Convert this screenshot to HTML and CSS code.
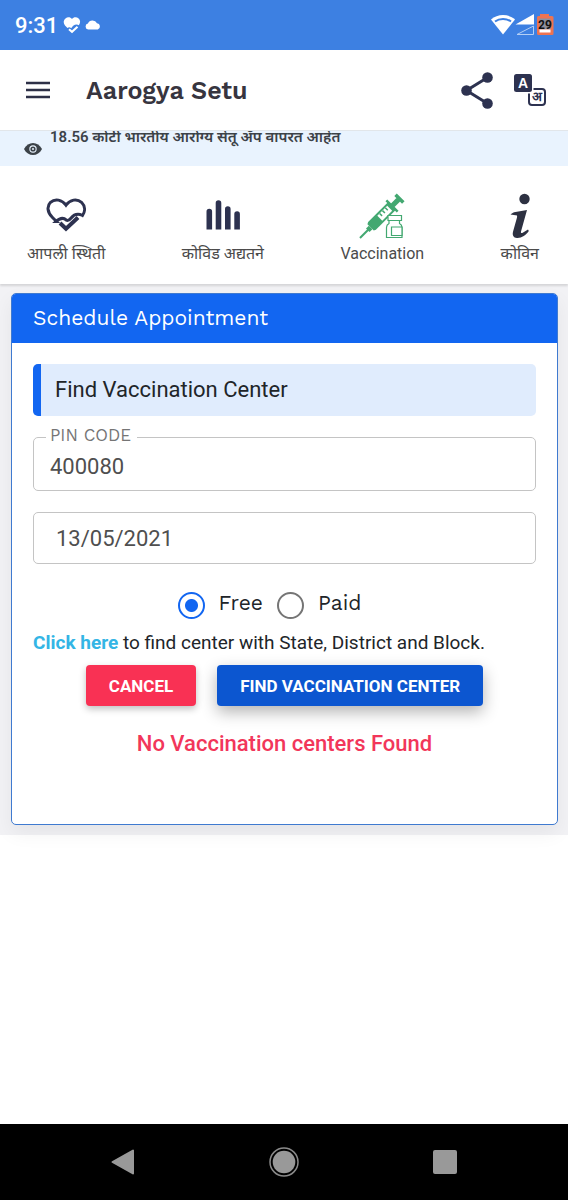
FILE: index.html
```html
<!DOCTYPE html>
<html lang="mr">
<head>
    <meta charset="UTF-8">
    <meta name="viewport" content="width=device-width, initial-scale=1.0">
    <title>Aarogya Setu</title>
    <link rel="stylesheet" href="styles.css">
</head>
<body>
    <div class="status-bar">
        <span class="clock">9:31</span>
        <svg class="status-heart" width="18" height="17" viewBox="0 0 18 17">
            <path d="M9 2C7.500 0 4.500-.200 2.500 1.400.200 3.300.200 6.400 2 8.500l2.500 2.600c1.200-1.200 2.600-1 3.700.100C9.600 9 11.300 7.500 13.500 7.500c1 0 1.700.200 2.300.700 1.700-2.100 1.800-4.900-.200-6.700C13.600-.200 10.500 0 9 2z" fill="#fff"/>
            <path d="M6 12.200l3 2.600 5.500-5" fill="none" stroke="#fff" stroke-width="2"/>
        </svg>
        <svg class="status-cloud" width="16" height="10" viewBox="0 0 16 10">
            <path d="M3.200 9.500a3 3 0 0 1-.3-5.900A5 5 0 0 1 12 3.300a3.200 3.200 0 0 1 .8 6.200z" fill="#fff"/>
        </svg>
        <svg class="status-signals" width="64" height="24" viewBox="0 0 64 24">
            <path d="M0 6.500C6.500.500 17.500.500 24 6.500L12 21.500z" fill="#fff"/>
            <path d="M4 8.500C8.500 5 15.500 5 20 8.500" fill="none" stroke="#3d80e2" stroke-width="2"/>
            <path d="M24.500 11.500L43 1v10.500z" fill="#fff"/>
            <path d="M26 21.500L42.500 13v8.500z" fill="none" stroke="#b4cff5"/>
            <path d="M49 1h9v2h3a1.500 1.500 0 0 1 1.500 1.500v16A1.500 1.500 0 0 1 61 22H47.500a1.500 1.500 0 0 1-1.500-1.500v-16A1.500 1.500 0 0 1 47.500 3H49z" fill="#ef7350"/>
            <path d="M48.500 5.500h11v11h-11z" fill="#8f8f9c"/>
            <path d="M48.500 16.500h11v3h-11z" fill="#fff"/>
            <text class="battery-level" x="54" y="16" text-anchor="middle">29</text>
        </svg>
    </div>

    <header class="app-header">
        <button class="icon-button" type="button" aria-label="Menu">
            <svg width="24" height="18" viewBox="0 0 24 18">
                <path d="M0 2h24M0 9h24M0 16h24" stroke="#2d3047" stroke-width="2.500"/>
            </svg>
        </button>
        <h1 class="app-title">Aarogya Setu</h1>
        <button class="icon-button" type="button" aria-label="Share">
            <svg width="32" height="38" viewBox="0 0 32 38">
                <path d="M26.500 6.500L5.500 19.500l21 13" fill="none" stroke="#2d3250" stroke-width="3"/>
                <circle cx="26.500" cy="6.500" r="5.300" fill="#2d3250"/>
                <circle cx="5.500" cy="19.500" r="5.300" fill="#2d3250"/>
                <circle cx="26.500" cy="32.500" r="5.300" fill="#2d3250"/>
            </svg>
        </button>
        <button class="icon-button" type="button" aria-label="Language">
            <svg width="32" height="34" viewBox="0 0 32 34">
                <rect x="15" y="16" width="16" height="16" rx="3" fill="#fff" stroke="#2d3250" stroke-width="2"/>
                <rect x="-1" y="0" width="20.500" height="20.500" rx="3" fill="#fff"/>
                <rect x="0" y="1" width="18" height="18" rx="2.500" fill="#2d3250"/>
                <text class="lang-latin" x="9" y="15" text-anchor="middle">A</text>
                <text class="lang-hindi" x="23" y="28" text-anchor="middle">अ</text>
            </svg>
        </button>
    </header>

    <div class="ticker">
        <svg width="18" height="12" viewBox="0 0 18 12">
            <path d="M0 6C4-2 14-2 18 6 14 14 4 14 0 6z" fill="#3c4248"/>
            <circle cx="9" cy="6" r="3.700" fill="#e9f3fe"/>
            <circle cx="9" cy="6" r="2.600" fill="#3c4248"/>
            <circle cx="9" cy="6" r="1" fill="#e9f3fe"/>
        </svg>
        <p class="ticker-text">18.56 कोटी भारतीय आरोग्य सेतू ॲप वापरत आहेत</p>
    </div>

    <nav class="tabs">
        <a class="tab" href="#status">
            <svg width="40" height="48" viewBox="0 0 40 48">
                <path d="M10.500 28.500L6.500 24.500C1 19 .800 13 4.500 9.300c4.500-4 11.500-2.800 15.500 2.900 4-5.700 11-6.900 15.500-2.900 3.700 3.700 4 8.900 1 13.200-4.600-2.300-8.600-1-11.600 2.700-1.800 2.200-3 2.800-4.500 2-2.600-2.500-6.400-2.300-10.400 1.300z" fill="none" stroke="#2d3250" stroke-width="3"/>
                <path d="M14 30l6 5.800L32 24.500" fill="none" stroke="#2d3250" stroke-width="4"/>
            </svg>
            <span>आपली स्थिती</span>
        </a>
        <a class="tab" href="#updates">
            <svg width="40" height="48" viewBox="0 0 40 48">
                <path d="M3.500 36.500V18.500a2.800 2.800 0 0 1 5.600 0v18zM12.700 36.500V10a2.800 2.800 0 0 1 5.600 0v26.500zM22 36.500V16a2.800 2.800 0 0 1 5.600 0v20.500zM31.300 36.500V21a2.800 2.800 0 0 1 5.600 0v15.500z" fill="#2d3250"/>
            </svg>
            <span>कोविड अद्यतने</span>
        </a>
        <a class="tab" href="#vaccination">
            <svg width="46" height="48" viewBox="0 0 46 48">
                <g transform="translate(1 45) rotate(-45)" fill="#43a871">
                    <path d="M0-1h12v2H0z"/>
                    <path d="M11-2.500h4v5h-4z"/>
                    <path d="M15-4.500l2-1h28v11H17l-2-1z"/>
                    <path d="M28-3.500h14v7H28z" fill="#fff"/>
                    <path d="M30.500-3.500h1.500v3.500h-1.500zM34.500-3.500h1.500v3.500h-1.500zM38.500-3.500h1.500v3.500h-1.500z"/>
                    <path d="M44-8h2.500V8H44zM46-2.500h9v5h-9zM54-5.500h3.500v11H54z"/>
                </g>
                <g fill="#fff" stroke="#43a871" stroke-width="1.200">
                    <path d="M30 27.500v3c-2 1-2.500 2-2.500 4v10H43v-10c0-2-.500-3-2.500-4v-3z"/>
                    <path d="M29 22.500h13.500v5H29zM32.500 34H43v8.500H32.500z"/>
                </g>
            </svg>
            <span>Vaccination</span>
        </a>
        <a class="tab" href="#cowin">
            <svg width="22" height="48" viewBox="0 0 22 48">
                <circle cx="15.500" cy="6" r="5.200" fill="#2d3142"/>
                <path d="M1.500 21.500c1-1.200 3-2.200 5-2.500l11.500-2-6 21.500c-.300 1.500.500 2 1.700 1.200l5.300-3.200.800 1.500C17 42 12.500 45.300 8 45c-3.800-.300-4.800-3-4-6.300L8 24.500c.400-1.700 0-2.300-1.500-2.300z" fill="#2d3142"/>
            </svg>
            <span>कोविन</span>
        </a>
    </nav>

    <main class="content">
        <section class="card">
            <h2 class="card-title">Schedule Appointment</h2>
            <form class="card-body">
                <h3 class="banner">Find Vaccination Center</h3>

                <fieldset class="pin-field">
                    <legend><label for="pin">PIN CODE</label></legend>
                    <input id="pin" type="text" inputmode="numeric" value="400080">
                </fieldset>

                <input class="date-field" type="text" aria-label="Date" value="13/05/2021">

                <div class="fee-options">
                    <input id="free" type="radio" name="fee" checked>
                    <label for="free">Free</label>
                    <input id="paid" type="radio" name="fee">
                    <label for="paid">Paid</label>
                </div>

                <p class="hint"><a href="#search">Click here</a> to find center with State, District and Block.</p>

                <div class="actions">
                    <button class="btn btn-cancel" type="button">CANCEL</button>
                    <button class="btn btn-find" type="button">FIND VACCINATION CENTER</button>
                </div>

                <p class="message">No Vaccination centers Found</p>
            </form>
        </section>
    </main>

    <div class="system-nav">
        <button class="icon-button" type="button" aria-label="Back">
            <svg width="24" height="30" viewBox="0 0 24 30">
                <path d="M1.500 15L22 3.500v23z" fill="#999" stroke="#999" stroke-width="2" stroke-linejoin="round"/>
            </svg>
        </button>
        <button class="icon-button" type="button" aria-label="Home">
            <svg width="30" height="30" viewBox="0 0 30 30">
                <circle cx="15" cy="15" r="14" fill="none" stroke="#8a8a8a" stroke-width="1.500"/>
                <circle cx="15" cy="15" r="11.300" fill="#999"/>
            </svg>
        </button>
        <button class="icon-button" type="button" aria-label="Recent apps">
            <svg width="24" height="30" viewBox="0 0 24 30">
                <rect x="0" y="3" width="24" height="24" rx="2" fill="#999"/>
            </svg>
        </button>
    </div>
</body>
</html>
```

FILE: styles.css
```css
* { box-sizing: border-box; }
body {
    margin: 0;
    min-height: 100vh;
    display: flex;
    flex-direction: column;
    background: #fff;
    color: #212529;
    font-family: Roboto, "Noto Sans", sans-serif;
}
h1, h2, h3, p { margin: 0; }
svg { display: block; flex: none; }
.icon-button {
    padding: 0;
    border: none;
    background: none;
    cursor: pointer;
}

/* phone status bar */
.status-bar {
    display: flex;
    align-items: center;
    height: 50px;
    padding: 0 13px 0 15px;
    background: #3d80e2;
    color: #fff;
}
.clock { font-size: 22px; font-weight: 500; }
.status-heart { margin-left: 5px; }
.status-cloud { margin-left: 4px; }
.status-signals { margin-left: auto; }
.battery-level { font-size: 12px; font-weight: 700; fill: #111; }

/* header */
.app-header {
    display: flex;
    align-items: center;
    height: 80px;
    padding: 0 22px 0 26px;
    gap: 21px;
}
.app-title {
    flex: 1;
    margin-left: 15px;
    font-family: "Work Sans", Inter, sans-serif;
    font-size: 25px;
    font-weight: 600;
    color: #37353f;
}
.lang-latin { font-size: 14px; font-weight: 700; fill: #fff; }
.lang-hindi { font-size: 13px; font-weight: 600; fill: #2d3250; }

.ticker {
    display: flex;
    height: 36px;
    padding: 0 24px;
    gap: 8px;
    align-items: center;
    overflow: hidden;
    border-top: 1px solid #e2e6ea;
    background: #e9f3fe;
}
.ticker-text {
    align-self: flex-start;
    margin-top: -6px;
    font-size: 15px;
    line-height: 24px;
    font-weight: 600;
    color: #3c4248;
    white-space: nowrap;
}

.tabs {
    display: flex;
    justify-content: space-between;
    height: 118px;
    padding: 27px 29px 0 27px;
    box-shadow: 0 2px 2px rgba(0,0,0,0.12);
    position: relative;
}
.tab {
    display: flex;
    flex-direction: column;
    align-items: center;
    color: #4b4b4b;
    font-size: 16px;
    line-height: 26px;
    text-decoration: none;
}

/* appointment card */
.content {
    padding: 9px 10px 10px 11px;
    background: #f2f2f5;
}
.card {
    border: 1px solid #3f7ad0;
    border-radius: 5px;
    background: #fff;
    overflow: hidden;
    box-shadow: 0 8px 20px rgba(0,0,0,0.06);
}
.card-title {
    padding: 8px 21px 9px;
    background: #1266f1;
    color: #fff;
    font-family: "Work Sans", Inter, sans-serif;
    font-size: 21px;
    line-height: 32px;
    font-weight: 400;
}
.card-body {
    display: flex;
    flex-direction: column;
    padding: 21px 21px 64px;
}
.banner {
    padding: 10px 14px;
    border-left: 8px solid #1266f1;
    border-radius: 5px;
    background: #e0ecfd;
    font-size: 22px;
    line-height: 32px;
    font-weight: 400;
}
.pin-field {
    min-width: 0;
    margin: 10px 0 0;
    padding: 0 16px;
    border: 1px solid #c4c4c4;
    border-radius: 5px;
}
.pin-field legend {
    margin-left: -4px;
    padding: 0 6px 0 4px;
    font-family: "Work Sans", Inter, sans-serif;
    font-size: 17px;
    line-height: 18px;
    color: #757575;
}
.pin-field label {
    display: block;
    padding-bottom: 4px;
}
.pin-field input {
    display: block;
    width: 100%;
    height: 42px;
    padding: 0 0 5px;
    border: none;
    outline: none;
    font-family: Roboto, sans-serif;
    font-size: 22px;
    color: #4f4f4f;
}
.date-field {
    width: 100%;
    height: 52px;
    margin-top: 21px;
    padding: 0 22px;
    border: 1px solid #c4c4c4;
    border-radius: 5px;
    font-family: Roboto, sans-serif;
    font-size: 22px;
    color: #4f4f4f;
}
.fee-options {
    display: flex;
    align-items: center;
    justify-content: center;
    gap: 14px;
    margin-top: 25px;
    padding-right: 30px;
    font-family: "Work Sans", Inter, sans-serif;
    font-size: 21px;
    line-height: 28px;
}
.fee-options label { padding-bottom: 4px; }
.fee-options input {
    appearance: none;
    width: 27px;
    height: 27px;
    margin: 0;
    border: 2px solid #757575;
    border-radius: 50%;
}
.fee-options input:checked {
    border-color: #1266f1;
    background: radial-gradient(circle, #1266f1 6px, #fff 7px);
}
.hint {
    margin-top: 8px;
    font-size: 19px;
    line-height: 28px;
}
.hint a {
    color: #33b5e5;
    font-weight: 700;
    text-decoration: none;
}
.actions {
    display: flex;
    justify-content: center;
    gap: 21px;
    margin-top: 8px;
}
.btn {
    height: 41px;
    padding: 0 23px;
    border: none;
    border-radius: 4px;
    color: #fff;
    font-family: Roboto, sans-serif;
    font-size: 17px;
    font-weight: 700;
    cursor: pointer;
}
.btn-cancel {
    background: #f93154;
    box-shadow: 0 3px 7px rgba(0,0,0,0.25);
}
.btn-find {
    background: #0c56d0;
    box-shadow: 0 6px 16px rgba(0,0,0,0.3);
}
.message {
    margin-top: 22px;
    color: #f2365a;
    font-size: 22px;
    line-height: 32px;
    font-weight: 500;
    text-align: center;
}

/* android buttons */
.system-nav {
    display: flex;
    align-items: center;
    justify-content: space-between;
    height: 76px;
    margin-top: auto;
    padding: 0 19.5%;
    background: #000;
}
```
